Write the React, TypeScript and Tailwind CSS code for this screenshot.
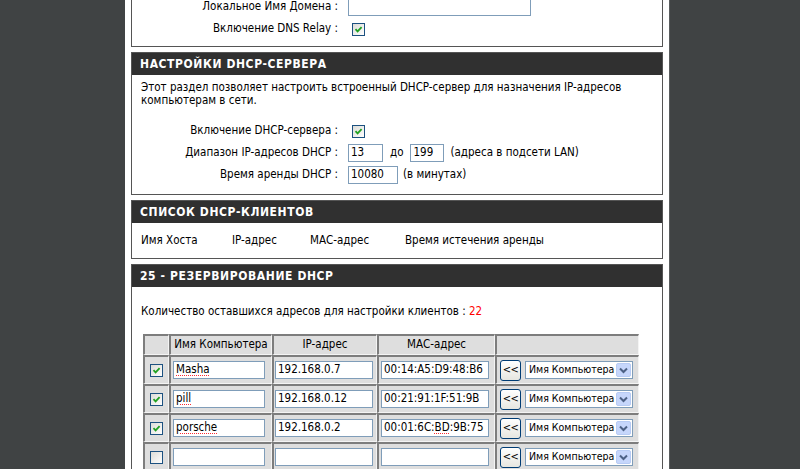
import React from 'react';

function Check({ on = true, className = '' }: { on?: boolean; className?: string }) {
  return (
    <span className={`inline-flex h-[13px] w-[13px] items-center justify-center border border-[#1c5180] bg-gradient-to-br from-[#dcdcd7] to-white ${className}`}>
      {on && (
        <svg width="9" height="9" viewBox="0 0 9 9">
          <path d="M1.5 4.2 L3.6 6.4 L7.6 2.2" fill="none" stroke="#21a121" strokeWidth="1.8" />
        </svg>
      )}
    </span>
  );
}

function Field({ value = '', w, squiggle = false }: { value?: string; w: string; squiggle?: boolean }) {
  return (
    <div className={`flex h-[18px] items-center overflow-hidden whitespace-nowrap border border-[#7f9db9] bg-white px-[2px] text-[11.5px] ${w}`}>
      <span className={squiggle ? 'underline decoration-dotted decoration-red-500 underline-offset-2' : ''}>{value}</span>
    </div>
  );
}

function MacField({ value }: { value: string }) {
  // only the "BD" part is marked by the spell checker in the picture
  if (value.includes(':BD:')) {
    const [a, b] = value.split('BD');
    return (
      <div className="flex h-[18px] w-[108px] items-center whitespace-nowrap border border-[#7f9db9] bg-white px-[2px] text-[11.5px]">
        <span>{a}</span>
        <span className="underline decoration-dotted decoration-red-500 underline-offset-2">BD</span>
        <span>{b}</span>
      </div>
    );
  }
  return <Field value={value} w="w-[108px]" />;
}

function Select() {
  return (
    <div className="flex h-[18px] w-[108px] items-center justify-between whitespace-nowrap border border-[#7f9db9] bg-white pl-[3px] pr-px text-[10.5px]">
      <span>Имя Компьютера</span>
      <span className="flex h-[14px] w-[15px] shrink-0 items-center justify-center rounded-[2px] border border-[#b7cbf4] bg-[#c6d6fb]">
        <svg width="9" height="7" viewBox="0 0 9 7">
          <path d="M1 1.5 L4.5 5 L8 1.5" fill="none" stroke="#4d6185" strokeWidth="2" />
        </svg>
      </span>
    </div>
  );
}

function Header({ title }: { title: string }) {
  return (
    <div className="flex h-[22px] items-center bg-[#303030] pl-2 font-['DejaVu_Sans_Condensed','DejaVu_Sans',sans-serif] text-[12px] font-bold tracking-[0.6px] text-white">
      {title}
    </div>
  );
}

const rows = [
  { on: true, name: 'Masha', ip: '192.168.0.7', mac: '00:14:A5:D9:48:B6' },
  { on: true, name: 'pill', ip: '192.168.0.12', mac: '00:21:91:1F:51:9B' },
  { on: true, name: 'porsche', ip: '192.168.0.2', mac: '00:01:6C:BD:9B:75' },
  { on: false, name: '', ip: '', mac: '' },
];

const cell =
  'border-t-2 border-l-2 border-b border-r border-t-[#7d7d7d] border-l-[#7d7d7d] border-b-[#f4f4f4] border-r-[#f4f4f4] bg-[#dedede] p-0';

export default function App() {
  return (
    <div className="flex h-[469px] w-[800px] overflow-hidden bg-white font-['DejaVu_Sans_Condensed','DejaVu_Sans',sans-serif] text-[11.5px] text-black">
      <div className="w-[125px] shrink-0 bg-[#404344]" />

      <div className="flex w-[544px] shrink-0 flex-col gap-[5px] px-[6px]">
        {/* local domain / dns relay (cut off) */}
        <div className="-mt-[4px] border-x border-b border-[#555]">
          <div className="grid grid-cols-[206px_1fr] gap-x-[10px] pb-[6px]">
            <div className="flex h-[22px] items-center justify-end">Локальное Имя Домена :</div>
            <div className="flex h-[22px] items-center">
              <Field w="w-[183px]" />
            </div>
            <div className="flex h-[22px] items-center justify-end">Включение DNS Relay :</div>
            <div className="flex h-[22px] items-center">
              <Check className="ml-[4px]" />
            </div>
          </div>
        </div>

        {/* DHCP server */}
        <div className="border border-[#555]">
          <Header title="НАСТРОЙКИ DHCP-СЕРВЕРА" />
          <div className="pb-[8px] pt-[6px]">
            <p className="pl-[9px] leading-[13px]">
              Этот раздел позволяет настроить встроенный DHCP-сервер для назначения IP-адресов
              <br />
              компьютерам в сети.
            </p>
            <div className="mt-[13px] grid grid-cols-[206px_1fr] gap-x-[10px]">
              <div className="flex h-[22px] items-center justify-end">Включение DHCP-сервера :</div>
              <div className="flex h-[22px] items-center">
                <Check className="ml-[4px]" />
              </div>
              <div className="flex h-[22px] items-center justify-end">Диапазон IP-адресов DHCP :</div>
              <div className="flex h-[22px] items-center gap-[6px]">
                <Field value="13" w="w-[35px]" />
                <span className="px-[1px]">до</span>
                <Field value="199" w="w-[34px]" />
                <span>(адреса в подсети LAN)</span>
              </div>
              <div className="flex h-[22px] items-center justify-end">Время аренды DHCP :</div>
              <div className="flex h-[22px] items-center gap-[5px]">
                <Field value="10080" w="w-[50px]" />
                <span>(в минутах)</span>
              </div>
            </div>
          </div>
        </div>

        {/* DHCP clients */}
        <div className="border border-[#555]">
          <Header title="СПИСОК DHCP-КЛИЕНТОВ" />
          <div className="flex h-[35px] items-center pl-[9px]">
            <span className="w-[91px]">Имя Хоста</span>
            <span className="w-[78px]">IP-адрес</span>
            <span className="w-[95px]">МАС-адрес</span>
            <span>Время истечения аренды</span>
          </div>
        </div>

        {/* reservations */}
        <div className="flex-1 border-x border-t border-[#555]">
          <Header title="25 - РЕЗЕРВИРОВАНИЕ DHCP" />
          <div className="pl-[9px] pt-[18px] leading-[13px]">
            Количество оставшихся адресов для настройки клиентов : <span className="text-[#ff0000]">22</span>
          </div>
          <table className="ml-[11px] mt-[16px] border-separate border-spacing-0">
            <thead>
              <tr className="h-[21px]">
                <th className={`${cell} w-[26px]`} />
                <th className={`${cell} w-[103px] whitespace-nowrap font-normal`}>Имя Компьютера</th>
                <th className={`${cell} w-[105px] font-normal`}>IP-адрес</th>
                <th className={`${cell} w-[118px] font-normal`}>МАС-адрес</th>
                <th className={`${cell} w-[144px]`} />
              </tr>
            </thead>
            <tbody>
              {rows.map((r, i) => (
                <tr key={i} className="h-[29px]">
                  <td className={cell}>
                    <div className="flex justify-center">
                      <Check on={r.on} />
                    </div>
                  </td>
                  <td className={cell}>
                    <div className="pl-[2px]">
                      <Field value={r.name} w="w-[92px]" squiggle={r.name !== ''} />
                    </div>
                  </td>
                  <td className={cell}>
                    <div className="pl-[1px]">
                      <Field value={r.ip} w="w-[98px]" />
                    </div>
                  </td>
                  <td className={cell}>
                    <div className="pl-[2px]">
                      <MacField value={r.mac} />
                    </div>
                  </td>
                  <td className={cell}>
                    <div className="flex items-center gap-[4px] pl-[3px]">
                      <span className="flex h-[21px] w-[21px] shrink-0 items-center justify-center rounded-[3px] border border-[#003c74] bg-gradient-to-b from-white to-[#e6e6e0] text-[11px] tracking-[-0.5px]">
                        &lt;&lt;
                      </span>
                      <Select />
                    </div>
                  </td>
                </tr>
              ))}
            </tbody>
          </table>
        </div>
      </div>

      <div className="flex-1 border-l border-[#5a5d5e] bg-[#404344]" />
    </div>
  );
}
